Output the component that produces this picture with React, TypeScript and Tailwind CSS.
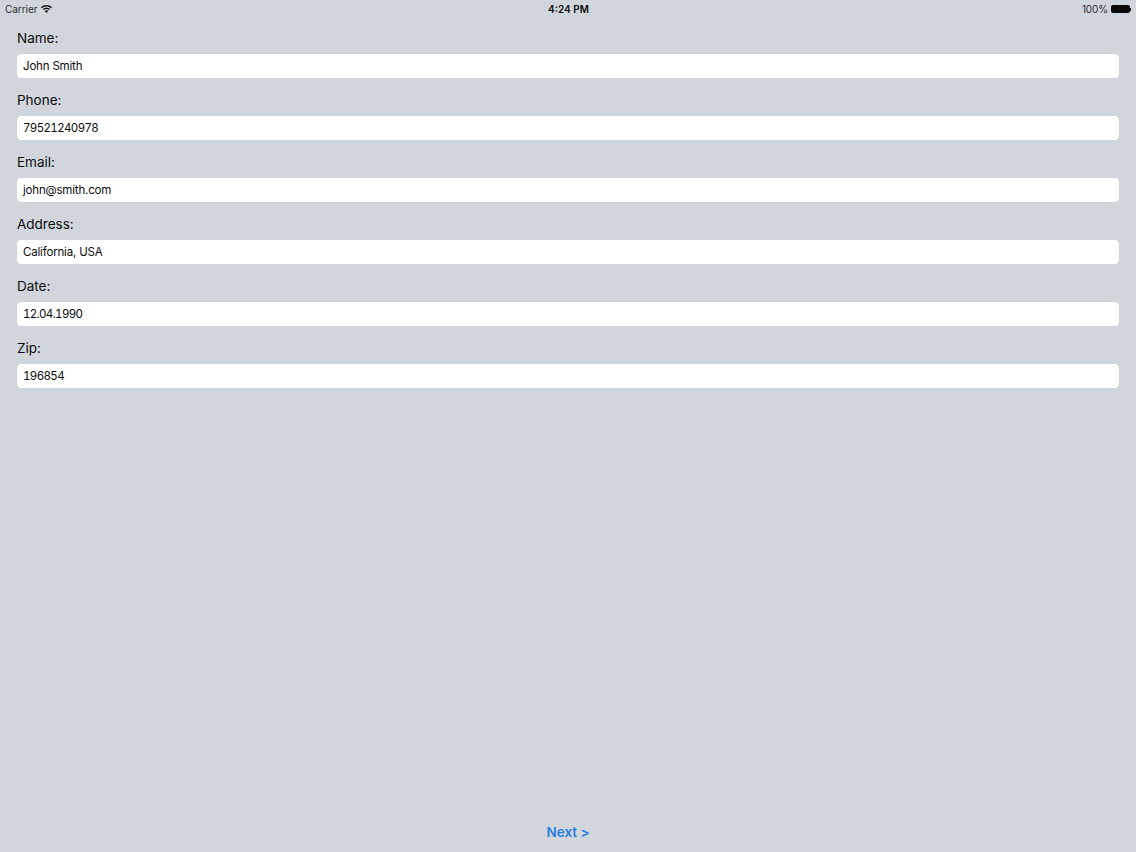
const fields = [
  ["Name:", "John Smith", "tracking-[-0.18px]"],
  ["Phone:", "79521240978", "tabular-nums tracking-[-0.62px]"],
  ["Email:", "john@smith.com", "tracking-[-0.18px]"],
  ["Address:", "California, USA", "tracking-[-0.18px]"],
  ["Date:", "12.04.1990", "tabular-nums tracking-[-0.65px]"],
  ["Zip:", "196854", "tabular-nums tracking-[-0.62px]"],
];

export default function App() {
  return (
    <div className="flex h-[852px] w-[1136px] flex-col overflow-hidden bg-[#d1d6dc] font-['Inter',sans-serif] text-[#0b0b0d]">
      <div className="grid h-[17px] grid-cols-3 items-center px-[5px] pt-[1px] text-[10px] leading-[16px]">
        <div className="flex items-center gap-[4px] text-[#2a2d33]">
          <span className="tracking-[-0.05px]">Carrier</span>
          <svg width="11" height="8" viewBox="0 0 11 8" fill="#111" className="mt-[-1px]">
            <path d="M5.5 0C3.4 0 1.6.8 0 2.2l.9 1C2.2 2 3.8 1.4 5.5 1.4s3.3.6 4.6 1.8l.9-1C9.4.8 7.6 0 5.5 0z" />
            <path d="M5.5 2.7c-1.4 0-2.6.5-3.6 1.4l.9 1c.7-.7 1.7-1 2.7-1s2 .3 2.7 1l.9-1c-1-.9-2.2-1.4-3.6-1.4z" />
            <path d="M5.5 5.3c-.7 0-1.3.3-1.8.7L5.5 8l1.8-2c-.5-.4-1.1-.7-1.8-.7z" />
          </svg>
        </div>
        <div className="pl-[1px] text-center font-semibold">4:24 PM</div>
        <div className="flex items-center justify-end gap-[3px] text-[#2a2d33]">
          <span className="tracking-[-0.1px]">100%</span>
          <span className="flex items-center">
            <span className="h-[8px] w-[19px] rounded-[2px] bg-[#0a0a0a]" />
            <span className="h-[3px] w-[1px] bg-[#0a0a0a]" />
          </span>
        </div>
      </div>
      <div className="flex flex-col px-[17px]">
        {fields.map(([label, value, spacing]) => (
          <div key={label} className="flex h-[62px] flex-col">
            <div className="flex h-[37px] items-end pb-[6px] text-[13.5px] leading-[20px]">{label}</div>
            <div className={"flex h-[24px] items-center rounded-[4px] bg-white px-[6px] pt-[2px] text-[11.5px] shadow-[0_0_1px_#b8bdc4] " + spacing}>
              {value}
            </div>
          </div>
        ))}
      </div>
      <div className="mt-auto pb-[10px] text-center text-[13.5px] font-semibold leading-[20px] text-[#2b7de0]">
        Next &gt;
      </div>
    </div>
  );
}
